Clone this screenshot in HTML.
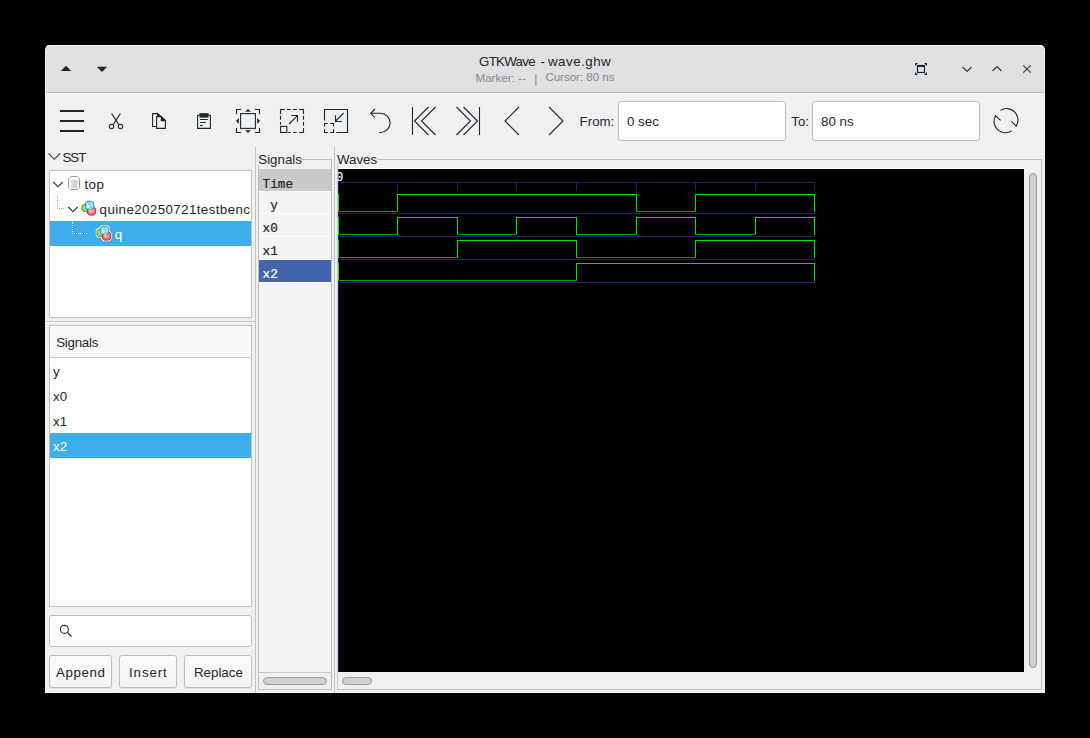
<!DOCTYPE html>
<html><head><meta charset="utf-8">
<style>
*{margin:0;padding:0;box-sizing:border-box}
html,body{width:1090px;height:738px;background:#000;overflow:hidden;font-family:"Liberation Sans",sans-serif;color:#232629;font-size:13.3px}
div,span,svg{position:absolute}
.t{white-space:pre;line-height:1}
svg{overflow:visible}
.ic{fill:none;stroke:#232629;stroke-width:1}
</style></head><body>
<!-- window -->
<div style="left:45px;top:45px;width:1000px;height:648px;background:#eff0f1;border-radius:5px 5px 0 0;border:1px solid #f4f4f5;border-top:none"></div>
<!-- header -->
<div style="left:46px;top:45px;width:998px;height:47px;background:#dee0e2;border-radius:4px 4px 0 0;border-top:1px solid #eceeef"></div>
<div style="left:46px;top:92px;width:998px;height:1px;background:#bcbec0"></div><div style="left:46px;top:93px;width:998px;height:1px;background:#f3f4f5"></div>
<span class="t" style="left:479px;top:55px;letter-spacing:-0.7px">GTKWave</span><span class="t" style="left:540.6px;top:55px">-</span><span class="t" style="left:548px;top:55px;letter-spacing:0.5px">wave.ghw</span>
<span class="t" style="left:475.5px;top:72px;font-size:11.6px;color:#88898b">Marker: --</span>
<span class="t" style="left:534.3px;top:73.3px;font-size:12px;color:#88898b">|</span>
<span class="t" style="left:545.4px;top:72px;font-size:11.5px;color:#88898b">Cursor: 80 ns</span>
<svg style="left:0;top:0" width="1090" height="100">
  <path d="M60.8 71 L66 65.8 L71.2 71 Z" fill="#232629"/>
  <path d="M96.8 66.8 L107.2 66.8 L102 72 Z" fill="#232629"/>
  <!-- fullscreen -->
  <path d="M915 63 H918 L915 66 Z M927 63 V66 L924 63 Z M915 75 V72 L918 75 Z M927 75 H924 L927 72 Z" fill="#232629"/>
  <rect x="917.5" y="65.5" width="7" height="7" fill="none" stroke="#232629" stroke-width="1.2"/>
  <rect x="917" y="65" width="8" height="2" fill="#232629"/>
  <path d="M962.5 67 L967 71.5 L971.5 67" fill="none" stroke="#3b3e41" stroke-width="1.2"/>
  <path d="M992.5 71 L997 66.5 L1001.5 71" fill="none" stroke="#3b3e41" stroke-width="1.2"/>
  <path d="M1023.3 65.3 L1030.7 72.7 M1030.7 65.3 L1023.3 72.7" fill="none" stroke="#3b3e41" stroke-width="1.2"/>
</svg>

<!-- toolbar -->
<svg style="left:0;top:0" width="1090" height="150">
  <g fill="none" stroke="#232629" stroke-width="2">
    <path d="M60 111 H84 M60 121 H84 M60 131 H84"/>
  </g>
  <g transform="translate(104,109)" fill="none" stroke="#232629" stroke-width="1.1">
    <path d="M7.6 4.6 L12.3 11.6 Q13.4 13.3 14.6 15.6 M16.4 4.6 L11.7 11.6 Q10.6 13.3 9.4 15.6"/>
    <circle cx="7.5" cy="17.5" r="2.2"/>
    <circle cx="16.5" cy="17.5" r="2.2"/>
  </g>
  <g transform="translate(148,109)" stroke="#232629" stroke-width="1.1" fill="none">
    <path d="M8.5 17.5 H4.6 V4.6 H9.5 L12.5 7.5"/>
    <path d="M9.5 4.6 L9.5 7.5 L12.5 7.5 Z" fill="#232629"/>
    <path d="M8.6 7.6 H13.3 L17.4 11.6 V19.4 H8.6 Z"/>
    <path d="M13.3 7.6 V11.6 H17.4 Z" fill="#232629"/>
  </g>
  <g transform="translate(192,109)" stroke="#232629" stroke-width="1.1" fill="none">
    <path d="M7.4 6.4 H5.6 V19.4 H18.4 V6.4 H16.6"/>
    <rect x="7.4" y="4.2" width="9.2" height="4.4" fill="#232629" stroke="none"/>
    <path d="M8 10.5 H15.8 M8 13.5 H13.8 M8 16.5 H10.8"/>
  </g>
  <g transform="translate(236,109)" stroke="#232629" stroke-width="1.1" fill="none">
    <path d="M0.5 5 V0.5 H5 M19 0.5 H23.5 V5 M23.5 19 V23.5 H19 M5 23.5 H0.5 V19"/>
    <rect x="4.6" y="4.6" width="14.8" height="14.8"/>
    <path d="M9 2.8 L12 0 L15 2.8 Z M9 21.2 L12 24 L15 21.2 Z M2.8 9 L0 12 L2.8 15 Z M21.2 9 L24 12 L21.2 15 Z" fill="#232629" stroke="none"/>
  </g>
  <g transform="translate(280,109)" stroke="#232629" stroke-width="1.1" fill="none">
    <path d="M0.5 5 V0.5 H5 M7 0.5 H10.7 M12.9 0.5 H16.8 M19 0.5 H23.5 V5 M23.5 6.8 V10.7 M23.5 13 V16.8 M23.5 19 V23.5 H19 M16.8 23.5 H13 M10.7 23.5 H8.1 M0.5 5 V0.5 M0.5 6.8 V10.7 M0.5 13 V15.7"/>
    <rect x="0.6" y="17.4" width="6.2" height="6.1"/>
    <path d="M9 15 L17.2 6.8 M11.2 6.5 H17.5 V12.7"/>
  </g>
  <g transform="translate(324,109)" stroke="#232629" stroke-width="1.1" fill="none">
    <path d="M0.5 11.6 V0.5 H23.5 V23.5 H12.3"/>
    <path d="M0.5 17.6 V14.5 H3.8 M6.2 14.5 H9.5 V17.6 M9.5 20.2 V23.5 H6.2 M3.8 23.5 H0.5 V20.2"/>
    <path d="M19.6 4 L11.6 12 M11.5 6.2 V12.5 H17.9"/>
  </g>
  <g transform="translate(368,109)" stroke="#232629" stroke-width="1.1" fill="none">
    <path d="M7 0 L2.6 4.3 L7 8.6 M2.6 4.3 H12.5 A9.6 9.6 0 0 1 12.5 23.5 H11.2"/>
  </g>
  <g fill="none" stroke="#232629" stroke-width="1.1">
    <path d="M412.5 107 V135 M428.5 107 L414.5 121 L428.5 135 M435.5 107 L421.5 121 L435.5 135"/>
    <path d="M456.5 107 L470.5 121 L456.5 135 M463.5 107 L477.5 121 L463.5 135 M479.5 107 V135"/>
    <path d="M519 107 L505 121 L519 135 M549 107 L563 121 L549 135"/>
  </g>
  <g transform="translate(994,109)" stroke="#232629" stroke-width="1.1" fill="none">
    <path d="M6.4 1.4 A11.4 11.4 0 0 1 22.2 17.1 L17.5 12.3 M17.5 22 A11.4 11.4 0 0 1 1.6 6.6 L6.6 11.4"/>
  </g>
</svg>
<span class="t" style="left:579.6px;top:115px">From:</span>
<div style="left:618px;top:101px;width:168px;height:40px;background:#fff;border:1px solid #bcbec0;border-radius:3px"></div>
<span class="t" style="left:627px;top:115px">0 sec</span>
<span class="t" style="left:791.3px;top:115px">To:</span>
<div style="left:812px;top:101px;width:168px;height:40px;background:#fff;border:1px solid #bcbec0;border-radius:3px"></div>
<span class="t" style="left:821px;top:115px">80 ns</span>

<!-- left pane -->
<svg style="left:0;top:0" width="300" height="700">
  <path d="M48.5 153.5 L54.3 159.3 L60.1 153.5" fill="none" stroke="#3b3e41" stroke-width="1.1"/>
</svg>
<span class="t" style="left:62.4px;top:151px;letter-spacing:-0.9px">SST</span>
<div style="left:49px;top:170px;width:203px;height:148px;background:#fff;border:1px solid #bcbec0"></div>
<div style="left:50px;top:221px;width:201px;height:25px;background:#3daee9"></div>
<svg style="left:0;top:0" width="300" height="700">
  <path d="M53.3 182 L58 186.7 L62.7 182" fill="none" stroke="#3b3e41" stroke-width="1.1"/>
  <path d="M68.3 207 L73 211.7 L77.7 207" fill="none" stroke="#3b3e41" stroke-width="1.1"/>
  <path d="M57.5 196 V208.5 H64" fill="none" stroke="#a8aaac" stroke-width="1" stroke-dasharray="1 1"/>
  <path d="M72.5 221 V233.5 H87" fill="none" stroke="#ffffff" stroke-width="1" stroke-dasharray="1 1"/>
  <!-- cylinder -->
  <g>
    <defs><linearGradient id="cg" x1="0" x2="1" y1="0" y2="0"><stop offset="0" stop-color="#f4f4f4"/><stop offset="0.35" stop-color="#d9d9d9"/><stop offset="0.7" stop-color="#cfcfcf"/><stop offset="1" stop-color="#e8e8e8"/></linearGradient></defs>
    <path d="M71 176.5 H77 L79.5 179 V187.5 L77.5 189.5 H70.5 L68.5 187.5 V179 Z" fill="#fcfcfc" stroke="#9a9a9a" stroke-width="1"/>
    <rect x="70" y="180" width="8" height="8" fill="url(#cg)"/>
    <path d="M70 180 Q74 182.6 78 180" fill="none" stroke="#c8c8c8" stroke-width="0.6"/>
  </g>
  <!-- module icon -->
  <g id="mod"><path d="M83.45 204.20 L87.75 204.20 L89.30 205.75 L89.30 210.05 L87.75 211.60 L83.45 211.60 L81.90 210.05 L81.90 205.75 Z" fill="#8dc85a" stroke="#5e9e2c" stroke-width="0.9"/><path d="M89.12 206.90 L93.88 206.90 L95.60 208.62 L95.60 213.38 L93.88 215.10 L89.12 215.10 L87.40 213.38 L87.40 208.62 Z" fill="#ee7074" stroke="#c2262c" stroke-width="0.9"/><path d="M87.09 201.25 L91.91 201.25 L93.65 202.99 L93.65 207.81 L91.91 209.55 L87.09 209.55 L85.35 207.81 L85.35 202.99 Z" fill="#86d4f4" stroke="#2e8fc0" stroke-width="0.9"/><path d="M87.6 203.0 v4.4 M87.6 205.3 h1.5 v2.1 h-1.5 M90.6 203.5 l1.8 1.2 v2.5" fill="none" stroke="#eef9fd" stroke-width="0.8"/><path d="M84.3 205.8 v3.6" fill="none" stroke="#e6f4d8" stroke-width="0.8"/><path d="M89.6 209.8 h1.5 v1.6 h-1.5 z M91.1 211.4 v2 M93.2 209.8 v2.5" fill="none" stroke="#fde6e7" stroke-width="0.8"/></g><g><path d="M97.82 228.10 L103.38 228.10 L105.40 230.12 L105.40 235.68 L103.38 237.70 L97.82 237.70 L95.80 235.68 L95.80 230.12 Z" fill="#fff"/><path d="M103.48 230.80 L109.52 230.80 L111.70 232.98 L111.70 239.02 L109.52 241.20 L103.48 241.20 L101.30 239.02 L101.30 232.98 Z" fill="#fff"/><path d="M101.45 225.15 L107.55 225.15 L109.75 227.36 L109.75 233.44 L107.55 235.65 L101.45 235.65 L99.25 233.44 L99.25 227.36 Z" fill="#fff"/><path d="M98.45 229.20 L102.75 229.20 L104.30 230.75 L104.30 235.05 L102.75 236.60 L98.45 236.60 L96.90 235.05 L96.90 230.75 Z" fill="#8dc85a" stroke="#5e9e2c" stroke-width="0.9"/><path d="M104.12 231.90 L108.88 231.90 L110.60 233.62 L110.60 238.38 L108.88 240.10 L104.12 240.10 L102.40 238.38 L102.40 233.62 Z" fill="#ee7074" stroke="#c2262c" stroke-width="0.9"/><path d="M102.09 226.25 L106.91 226.25 L108.65 227.99 L108.65 232.81 L106.91 234.55 L102.09 234.55 L100.35 232.81 L100.35 227.99 Z" fill="#86d4f4" stroke="#2e8fc0" stroke-width="0.9"/><path d="M102.6 228.0 v4.4 M102.6 230.3 h1.5 v2.1 h-1.5 M105.6 228.5 l1.8 1.2 v2.5" fill="none" stroke="#eef9fd" stroke-width="0.8"/><path d="M99.3 230.8 v3.6" fill="none" stroke="#e6f4d8" stroke-width="0.8"/><path d="M104.6 234.8 h1.5 v1.6 h-1.5 z M106.1 236.4 v2 M108.2 234.8 v2.5" fill="none" stroke="#fde6e7" stroke-width="0.8"/></g>
</svg>
<span class="t" style="left:84.4px;top:178px;letter-spacing:0.5px">top</span>
<div style="left:99.6px;top:203px;width:151px;height:16px;overflow:hidden"><span class="t" style="left:0;top:0;letter-spacing:0.42px">quine20250721testbench</span></div>
<span class="t" style="left:114.7px;top:228px;color:#fff">q</span>
<div style="left:46px;top:321px;width:209px;height:1px;background:#c4c6c8"></div>
<div style="left:46px;top:322px;width:209px;height:1px;background:#f6f7f7"></div>
<div style="left:49px;top:325px;width:203px;height:282px;background:#fff;border:1px solid #bcbec0"></div>
<div style="left:50px;top:326px;width:201px;height:31px;background:#f9f9fa"></div>
<div style="left:50px;top:357px;width:201px;height:1px;background:#c6c8ca"></div>
<span class="t" style="left:56.2px;top:336px;letter-spacing:-0.25px">Signals</span>
<span class="t" style="left:53px;top:365px">y</span>
<span class="t" style="left:53px;top:390px">x0</span>
<span class="t" style="left:53px;top:415px">x1</span>
<div style="left:50px;top:433px;width:201px;height:25px;background:#3daee9"></div>
<span class="t" style="left:53px;top:440px;color:#fff">x2</span>
<div style="left:49px;top:615px;width:203px;height:32px;background:#fff;border:1px solid #bcbec0;border-radius:3px"></div>
<svg style="left:0;top:0" width="300" height="700">
  <circle cx="64.4" cy="629.4" r="4" fill="none" stroke="#232629" stroke-width="1.1"/>
  <path d="M67.3 632.3 L71.5 636.5" stroke="#232629" stroke-width="1.2"/>
</svg>
<div style="left:49px;top:655px;width:63px;height:33px;background:linear-gradient(#fcfcfc,#f2f3f4);border:1px solid #bcbec0;border-radius:3px;box-shadow:0 1px 0 rgba(0,0,0,0.06)"></div>
<div style="left:119px;top:655px;width:58px;height:33px;background:linear-gradient(#fcfcfc,#f2f3f4);border:1px solid #bcbec0;border-radius:3px;box-shadow:0 1px 0 rgba(0,0,0,0.06)"></div>
<div style="left:184px;top:655px;width:68px;height:33px;background:linear-gradient(#fcfcfc,#f2f3f4);border:1px solid #bcbec0;border-radius:3px;box-shadow:0 1px 0 rgba(0,0,0,0.06)"></div>
<span class="t" style="left:56px;top:666px;letter-spacing:0.6px">Append</span>
<span class="t" style="left:129px;top:666px;letter-spacing:0.9px">Insert</span>
<span class="t" style="left:194px;top:666px">Replace</span>
<div style="left:255px;top:147px;width:1px;height:546px;background:#c0c2c4"></div>
<div style="left:334px;top:147px;width:1px;height:546px;background:#c0c2c4"></div>

<!-- signals frame -->
<span class="t" style="left:258.3px;top:153.3px">Signals</span>
<div style="left:300px;top:159px;width:32px;height:1px;background:#bcbec0"></div>
<div style="left:258px;top:165px;width:1px;height:525px;background:#bcbec0"></div>
<div style="left:331px;top:159px;width:1px;height:531px;background:#bcbec0"></div>
<div style="left:258px;top:689px;width:74px;height:1px;background:#bcbec0"></div>
<div style="left:259px;top:169px;width:72px;height:503px;background:#f4f4f4"></div>
<div style="left:259px;top:169px;width:72px;height:22px;background:#c9c9c9"></div>
<div style="left:259px;top:191px;width:72px;height:1px;background:#fff"></div>
<div style="left:259px;top:213px;width:72px;height:1px;background:#fff"></div>
<div style="left:259px;top:236px;width:72px;height:1px;background:#fff"></div>
<div style="left:259px;top:259px;width:72px;height:1px;background:#fff"></div>
<div style="left:259px;top:260px;width:72px;height:22px;background:#4464ac"></div>
<div style="left:259px;top:282px;width:72px;height:1px;background:#fff"></div>
<div style="left:259px;top:672px;width:72px;height:1px;background:#c6c8ca"></div>
<div style="left:263px;top:677px;width:64px;height:8px;background:#cfd0d1;border:1px solid #9c9ea0;border-radius:4px"></div>
<span class="t" style="font-family:'Liberation Mono',monospace;font-size:12.67px;-webkit-text-stroke:0.22px currentColor;left:262.6px;top:178.5px">Time</span>
<span class="t" style="font-family:'Liberation Mono',monospace;font-size:12.67px;-webkit-text-stroke:0.22px currentColor;left:262.6px;top:200.3px"> y</span>
<span class="t" style="font-family:'Liberation Mono',monospace;font-size:12.67px;-webkit-text-stroke:0.22px currentColor;left:262.6px;top:223.3px">x0</span>
<span class="t" style="font-family:'Liberation Mono',monospace;font-size:12.67px;-webkit-text-stroke:0.22px currentColor;left:262.6px;top:246.3px">x1</span>
<span class="t" style="font-family:'Liberation Mono',monospace;font-size:12.67px;-webkit-text-stroke:0.22px currentColor;left:262.6px;top:269.3px;color:#fff">x2</span>
<!-- waves frame -->
<span class="t" style="left:337px;top:153.3px">Waves</span>
<div style="left:378px;top:159px;width:664px;height:1px;background:#bcbec0"></div>
<div style="left:337px;top:163px;width:1px;height:527px;background:#c8cacc"></div>
<div style="left:1041px;top:159px;width:1px;height:531px;background:#bcbec0"></div>
<div style="left:337px;top:689px;width:705px;height:1px;background:#bcbec0"></div>
<div style="left:338px;top:168px;width:686px;height:1px;background:#fff"></div>
<div style="left:338px;top:169px;width:686px;height:503px;background:#000"></div>
<div style="left:1029px;top:173px;width:8px;height:495px;background:#cfd0d1;border:1px solid #9c9ea0;border-radius:4px"></div>
<div style="left:342px;top:677px;width:30px;height:8px;background:#cfd0d1;border:1px solid #9c9ea0;border-radius:4px"></div>
<!--W--><svg style="left:0;top:0" width="1090" height="738" shape-rendering="crispEdges"><rect x="338" y="182" width="477" height="1" fill="#20206e"/><rect x="338" y="169" width="1" height="503" fill="#20206e"/><rect x="397" y="182" width="1" height="9" fill="#20206e"/><rect x="457" y="182" width="1" height="9" fill="#20206e"/><rect x="516" y="182" width="1" height="9" fill="#20206e"/><rect x="576" y="182" width="1" height="9" fill="#20206e"/><rect x="636" y="182" width="1" height="9" fill="#20206e"/><rect x="695" y="182" width="1" height="9" fill="#20206e"/><rect x="755" y="182" width="1" height="9" fill="#20206e"/><rect x="814" y="182" width="1" height="9" fill="#20206e"/><rect x="338" y="213" width="477" height="1" fill="#20206e"/><rect x="338" y="211" width="60" height="1" fill="#00a000"/><rect x="338" y="194" width="1" height="17" fill="#00e400"/><rect x="397" y="194" width="240" height="1" fill="#00e400"/><rect x="397" y="194" width="1" height="17" fill="#00e400"/><rect x="636" y="211" width="60" height="1" fill="#00a000"/><rect x="636" y="194" width="1" height="17" fill="#00e400"/><rect x="695" y="194" width="120" height="1" fill="#00e400"/><rect x="695" y="194" width="1" height="17" fill="#00e400"/><rect x="814" y="194" width="1" height="18" fill="#00e400"/><rect x="338" y="236" width="477" height="1" fill="#20206e"/><rect x="338" y="234" width="60" height="1" fill="#00a000"/><rect x="338" y="217" width="1" height="17" fill="#00e400"/><rect x="397" y="217" width="61" height="1" fill="#00e400"/><rect x="397" y="217" width="1" height="17" fill="#00e400"/><rect x="457" y="234" width="60" height="1" fill="#00a000"/><rect x="457" y="217" width="1" height="17" fill="#00e400"/><rect x="516" y="217" width="61" height="1" fill="#00e400"/><rect x="516" y="217" width="1" height="17" fill="#00e400"/><rect x="576" y="234" width="61" height="1" fill="#00a000"/><rect x="576" y="217" width="1" height="17" fill="#00e400"/><rect x="636" y="217" width="60" height="1" fill="#00e400"/><rect x="636" y="217" width="1" height="17" fill="#00e400"/><rect x="695" y="234" width="61" height="1" fill="#00a000"/><rect x="695" y="217" width="1" height="17" fill="#00e400"/><rect x="755" y="217" width="60" height="1" fill="#00e400"/><rect x="755" y="217" width="1" height="17" fill="#00e400"/><rect x="814" y="217" width="1" height="18" fill="#00e400"/><rect x="338" y="259" width="477" height="1" fill="#20206e"/><rect x="338" y="257" width="120" height="1" fill="#00a000"/><rect x="338" y="240" width="1" height="17" fill="#00e400"/><rect x="457" y="240" width="120" height="1" fill="#00e400"/><rect x="457" y="240" width="1" height="17" fill="#00e400"/><rect x="576" y="257" width="120" height="1" fill="#00a000"/><rect x="576" y="240" width="1" height="17" fill="#00e400"/><rect x="695" y="240" width="120" height="1" fill="#00e400"/><rect x="695" y="240" width="1" height="17" fill="#00e400"/><rect x="814" y="240" width="1" height="18" fill="#00e400"/><rect x="338" y="282" width="477" height="1" fill="#20206e"/><rect x="338" y="280" width="239" height="1" fill="#00a000"/><rect x="338" y="263" width="1" height="17" fill="#00e400"/><rect x="576" y="263" width="239" height="1" fill="#00e400"/><rect x="576" y="263" width="1" height="17" fill="#00e400"/><rect x="814" y="263" width="1" height="18" fill="#00e400"/></svg><!--/W-->
<div style="left:338px;top:169px;width:12px;height:13px;overflow:hidden"><span class="t" style="font-family:'Liberation Mono',monospace;font-size:12px;left:-2px;top:2.7px;color:#fff;-webkit-text-stroke:0.2px #fff">0</span></div>
</body></html>
